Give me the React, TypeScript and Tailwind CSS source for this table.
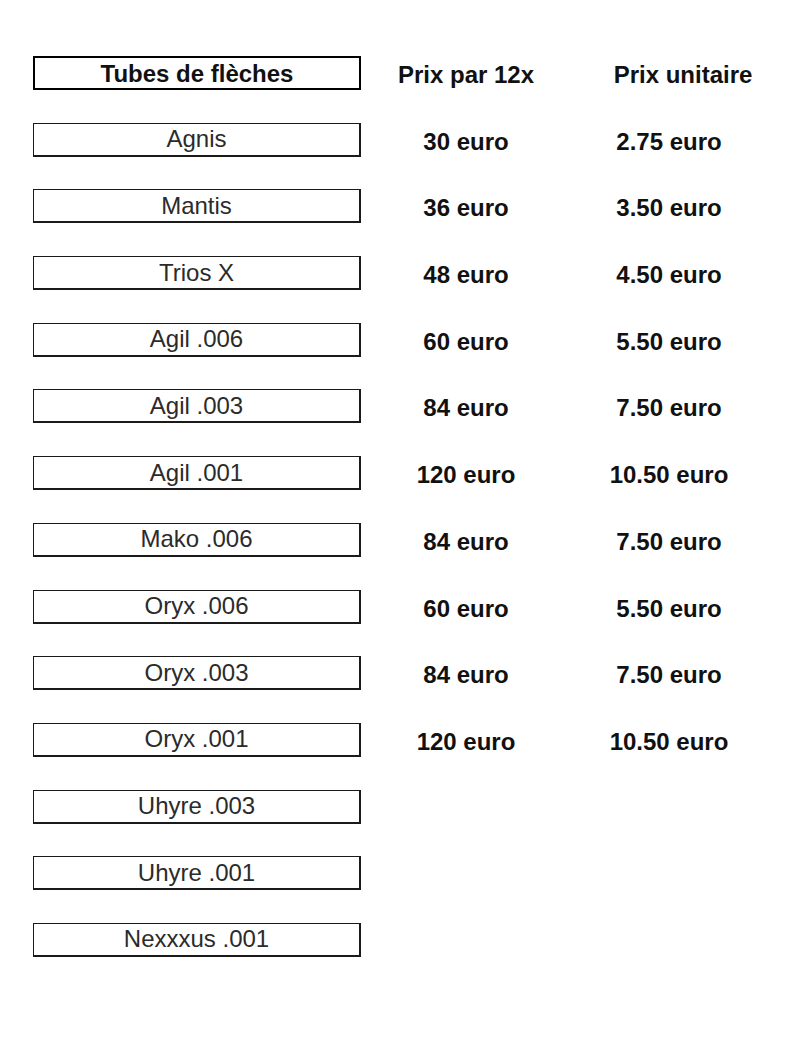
import React from 'react';

const rows: { name: string; dozen?: string; unit?: string }[] = [
  { name: 'Agnis', dozen: '30 euro', unit: '2.75 euro' },
  { name: 'Mantis', dozen: '36 euro', unit: '3.50 euro' },
  { name: 'Trios X', dozen: '48 euro', unit: '4.50 euro' },
  { name: 'Agil .006', dozen: '60 euro', unit: '5.50 euro' },
  { name: 'Agil .003', dozen: '84 euro', unit: '7.50 euro' },
  { name: 'Agil .001', dozen: '120 euro', unit: '10.50 euro' },
  { name: 'Mako .006', dozen: '84 euro', unit: '7.50 euro' },
  { name: 'Oryx .006', dozen: '60 euro', unit: '5.50 euro' },
  { name: 'Oryx .003', dozen: '84 euro', unit: '7.50 euro' },
  { name: 'Oryx .001', dozen: '120 euro', unit: '10.50 euro' },
  { name: 'Uhyre .003' },
  { name: 'Uhyre .001' },
  { name: 'Nexxxus .001' },
];

const App = () => {
  return (
    <div
      className="min-h-[1043px] w-[800px] bg-white pt-[56px] pl-[33px] text-[#111]"
      style={{ fontFamily: '"Liberation Sans", Arial, sans-serif' }}
    >
      <div className="flex flex-col gap-[32.7px]">
        <div className="flex h-[34px]">
          <div className="flex w-[328px] items-center justify-center border-2 border-black pt-[2px] text-[24px] font-bold leading-none">
            Tubes de flèches
          </div>
          <div className="flex w-[210px] items-center justify-center pt-[4px] text-[24px] font-bold leading-none">
            Prix par 12x
          </div>
          <div className="flex w-[196px] items-center justify-center pl-[28px] pt-[4px] text-[24px] font-bold leading-none">
            Prix unitaire
          </div>
        </div>

        {rows.map((row) => (
          <div key={row.name} className="flex h-[34px]">
            <div className="flex w-[328px] items-center justify-center border-[1.5px] border-r-2 border-b-2 border-[#1a1a1a] text-[24px] leading-none text-[#2b2b2b]">
              {row.name}
            </div>
            {row.dozen && (
              <div className="flex w-[210px] items-center justify-center pt-[4px] text-[24px] font-bold leading-none">
                {row.dozen}
              </div>
            )}
            {row.unit && (
              <div className="flex w-[196px] items-center justify-center pt-[4px] text-[24px] font-bold leading-none">
                {row.unit}
              </div>
            )}
          </div>
        ))}
      </div>
    </div>
  );
};

export default App;
